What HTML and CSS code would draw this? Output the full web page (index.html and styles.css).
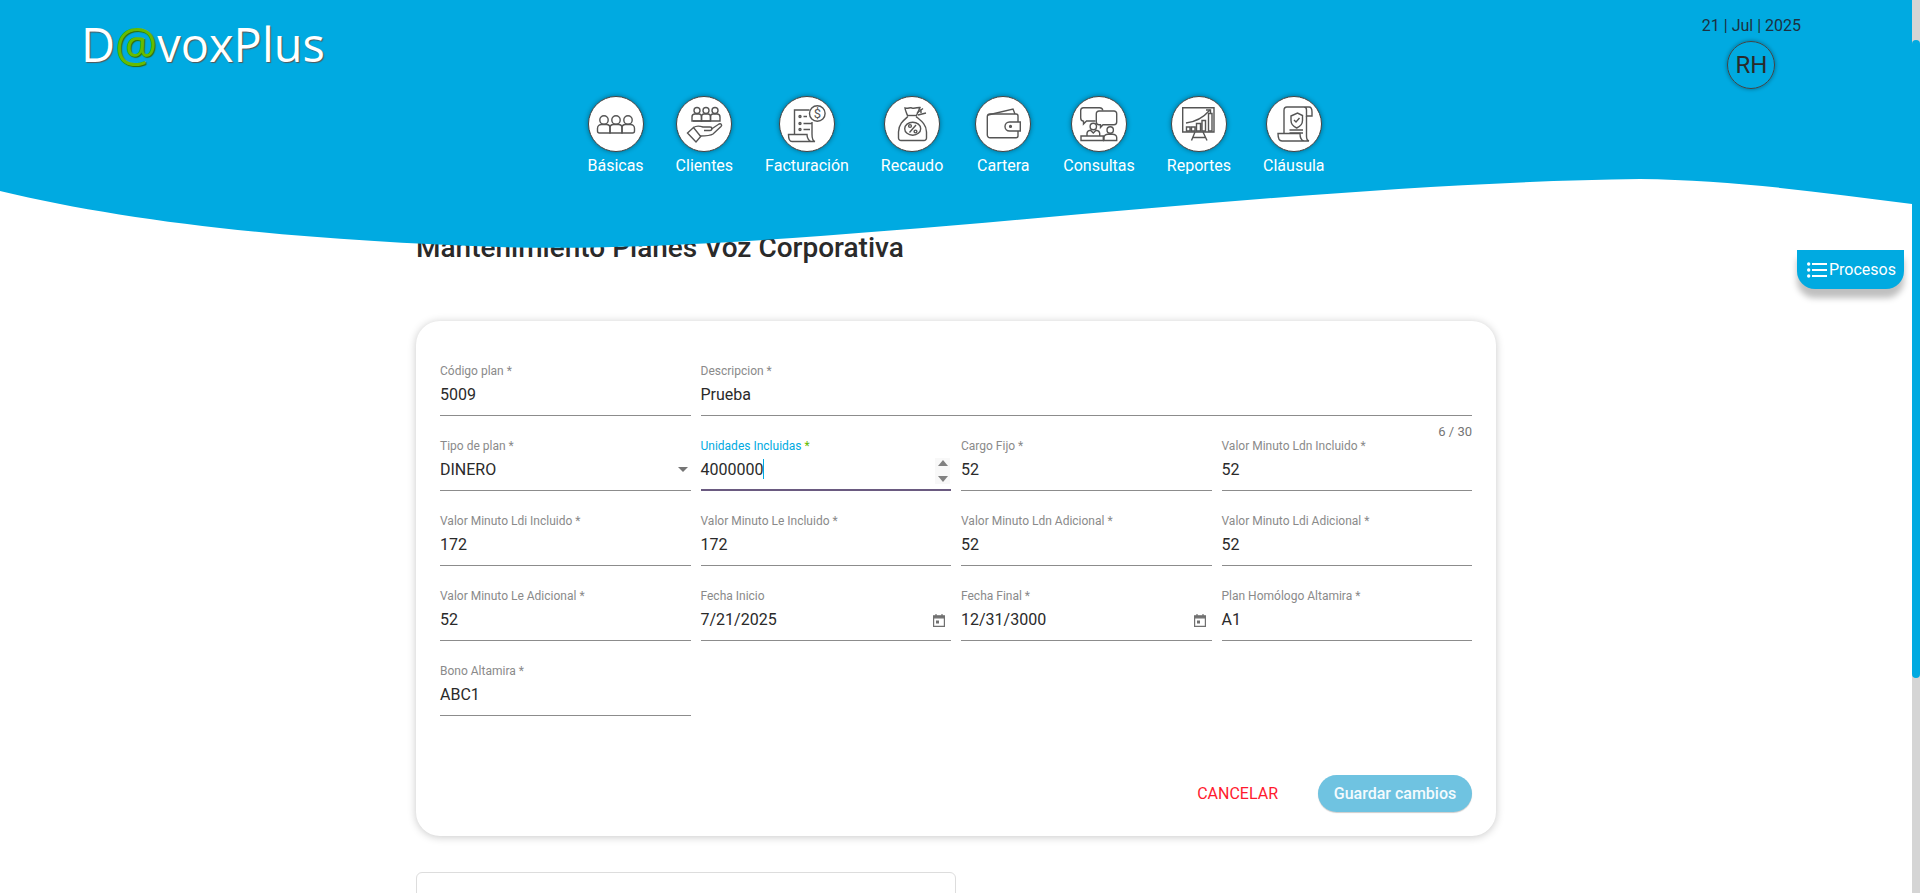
FILE: index.html
```html
<html>
    <head>
        <title>DavoxPlus - Planes Voz Corporativa</title>
        <meta charset="utf-8">
        <link rel="stylesheet" href="styles.css">
    </head>
    <body>
        <div class="app">
            <div class="main">
                <header class="header">
                    <svg class="wave" viewBox="0 0 1912 250" preserveAspectRatio="none">
                        <path d="M0 0H1912V204C1820 192 1730 180 1640 179C1250 184 800 256 500 247C290 240 130 222 0 191Z"/>
                    </svg>
                    <div class="topbar">
                        <div class="logo">D<span class="at">@</span>voxPlus</div>
                        <div class="user">
                            <div class="date">21 | Jul | 2025</div>
                            <div class="avatar">RH</div>
                        </div>
                    </div>
                    <nav class="nav">
                        <a class="nav-item">
                            <span class="circle">
                                <svg viewBox="1 1 54 54">
                                    <circle cx="16" cy="24" r="4.2"/><circle cx="28" cy="24" r="4.2"/><circle cx="40" cy="24" r="4.2"/>
                                    <path d="M9.5 35V32.5C9.5 30 11.5 28.5 13.5 28.5H18.5C20.5 28.5 22 30 22 32V37H11.5A2 2 0 0 1 9.5 35Z"/>
                                    <path d="M22 37V32C22 30 23.5 28.5 25.5 28.5H30.5C32.5 28.5 34 30 34 32V37Z"/>
                                    <path d="M34 37V32C34 30 35.5 28.5 37.5 28.5H42.5C44.5 28.5 46.5 30 46.5 32.5V35A2 2 0 0 1 44.5 37Z"/>
                                </svg>
                            </span>
                            <span class="nav-label">Básicas</span>
                        </a>
                        <a class="nav-item">
                            <span class="circle">
                                <svg viewBox="1 1 54 54">
                                    <circle cx="21" cy="14.5" r="3"/><circle cx="30" cy="14.5" r="3"/><circle cx="39" cy="14.5" r="3"/>
                                    <path d="M16 25V21C16 19 17 18 19 18H23C24.5 18 25.5 19 25.5 21V25Z"/>
                                    <path d="M25.5 25V21C25.5 19 26.5 18 28 18H32C33.5 18 34.5 19 34.5 21V25Z"/>
                                    <path d="M34.5 25V21C34.5 19 35.5 18 37 18H41C43 18 44 19 44 21V25H17"/>
                                    <path d="M11.5 37L17.5 31.5L24.7 40.5L20 46Z"/>
                                    <path d="M17.5 31.5C21 29 24 30 27 31H34C36.5 31 36.5 34.5 34 34.5H28"/>
                                    <path d="M35.5 33L43 28C45 27 46.5 29 45 30.5L37 38C34 40 29 40 24 40"/>
                                </svg>
                            </span>
                            <span class="nav-label">Clientes</span>
                        </a>
                        <a class="nav-item">
                            <span class="circle">
                                <svg viewBox="1 1 54 54">
                                    <path d="M30.5 14H15.5V38"/>
                                    <path d="M33 26V38C33 41 33.5 45 36 45.5H13C11 45.5 9.5 43 9.5 38.5H28C28 42 30 45 32 45.5"/>
                                    <circle cx="38.3" cy="17.5" r="7.8"/>
                                    <text class="glyph" x="38.3" y="22" text-anchor="middle">$</text>
                                    <circle cx="21" cy="20.5" r="1"/><circle cx="21" cy="27.5" r="1"/><circle cx="21" cy="33.5" r="1"/>
                                    <path d="M24.5 20.5H28M24.5 27.5H33M24.5 33.5H31"/>
                                </svg>
                            </span>
                            <span class="nav-label">Facturación</span>
                        </a>
                        <a class="nav-item">
                            <span class="circle">
                                <svg viewBox="1 1 54 54">
                                    <path d="M23.5 19.5C22.5 17 21 14 21 12C24 13 26 11 28 12C31 13 34 11 36 11.5C35 14 33.5 17 32.5 19.5"/>
                                    <path d="M23 19.5H33"/>
                                    <path d="M24 20.5C20 24 14.5 28 14.5 36V42A2.5 2.5 0 0 0 17 44.5H40A2.5 2.5 0 0 0 42.5 42V36C42.5 28 36 24 32 20.5"/>
                                    <path d="M33 17L39 12.5M34 19L42 17M37 13V17"/>
                                    <ellipse cx="28.7" cy="32.7" rx="8" ry="6.5"/>
                                    <path d="M32 29L25.5 36.5"/>
                                    <circle cx="26" cy="30" r="1.4"/><circle cx="31.5" cy="35.5" r="1.4"/>
                                </svg>
                            </span>
                            <span class="nav-label">Recaudo</span>
                        </a>
                        <a class="nav-item">
                            <span class="circle">
                                <svg viewBox="1 1 54 54">
                                    <path d="M13 19L38 13L40 18"/>
                                    <path d="M43 26V20A2 2 0 0 0 41 18H15A2.7 2.7 0 0 0 12.3 20.5V39A2.7 2.7 0 0 0 15 41.7H41A2 2 0 0 0 43 39.7V35"/>
                                    <path d="M45.3 26H34.5A4.5 4.5 0 0 0 34.5 35H45.3Z"/>
                                    <circle cx="35.5" cy="30.4" r="0.9"/>
                                </svg>
                            </span>
                            <span class="nav-label">Cartera</span>
                        </a>
                        <a class="nav-item">
                            <span class="circle">
                                <svg viewBox="1 1 54 54">
                                    <path d="M24.5 25H15.5L12.5 28V25.2C11 25 9.7 24 9.7 22V14.5C9.7 12.8 11 11.7 12.5 11.7H28.5C30.3 11.7 31.7 12.8 31.7 14.5"/>
                                    <path d="M28 15H43A2.7 2.7 0 0 1 45.7 17.7V26A2.7 2.7 0 0 1 43 28.7H32L29.5 31.5V28.7H28A2.7 2.7 0 0 1 25.3 26V17.7A2.7 2.7 0 0 1 28 15Z"/>
                                    <circle cx="22.3" cy="30.5" r="3.2"/>
                                    <path d="M16 40V37.5C16 35.5 17.5 34.5 19.5 34.2L22.3 37L25 34.2C27 34.5 28.7 35.5 28.7 37.5V40"/>
                                    <path d="M10 40H32.3V44.5H10Z"/>
                                    <circle cx="39.2" cy="34" r="3.2"/>
                                    <path d="M33 44.5V41.5C33 39.5 35 38.2 37 38.2H41.5C43.7 38.2 45.7 39.5 45.7 41.5V44.5H32"/>
                                </svg>
                            </span>
                            <span class="nav-label">Consultas</span>
                        </a>
                        <a class="nav-item">
                            <span class="circle">
                                <svg viewBox="1 1 54 54">
                                    <path d="M11.7 11.7H43V36H11.7Z"/>
                                    <path d="M15.5 31H19V35H15.5ZM20.5 31H24V35H20.5ZM25.5 27.5H29.5V35H25.5ZM31 24.5H34.5V35H31ZM37.5 17.5H41V35H37.5Z"/>
                                    <path d="M15 27C24 26 32 22 39 14"/>
                                    <path d="M35 14H39.5V18"/>
                                    <path d="M24 36L20.5 44.5M32 36L36 44.5M22 41.5H34.5"/>
                                </svg>
                            </span>
                            <span class="nav-label">Reportes</span>
                        </a>
                        <a class="nav-item">
                            <span class="circle">
                                <svg viewBox="1 1 54 54">
                                    <path d="M18 37V14.5C18 12.5 19 11 21 11H43C45.5 11 46 13 46 16V20H40.5V14C40.5 12 39.5 11 38 11"/>
                                    <path d="M40.5 20V40C40.5 42 41 44.5 43 45H16C13.5 45 12 42 12 37.5H34C34 41 35.5 44.5 38 45"/>
                                    <path d="M25 20L31.5 17L36.5 19.5V24.5C36.5 28.5 34 30.5 30.7 32C27.5 30.5 25 28.5 25 24.5Z"/>
                                    <path d="M28 24L30 26L33.5 22"/>
                                    <path d="M23.5 34H37M23.5 37H37"/>
                                </svg>
                            </span>
                            <span class="nav-label">Cláusula</span>
                        </a>
                    </nav>
                </header>

                <a class="procesos">
                    <svg class="procesos-icon" viewBox="0 0 20 16">
                        <circle cx="1.7" cy="2" r="1.7"/><circle cx="1.7" cy="8" r="1.7"/><circle cx="1.7" cy="14" r="1.7"/>
                        <path d="M5 1H20V3H5ZM5 7H20V9H5ZM5 13H20V15H5Z"/>
                    </svg>
                    Procesos
                </a>

                <div class="page">
                    <h1 class="title">Mantenimiento Planes Voz Corporativa</h1>

                    <form class="card">
                        <div class="grid">
                            <div class="field">
                                <label>Código plan *</label>
                                <div class="value">5009</div>
                            </div>
                            <div class="field span-3">
                                <label>Descripcion *</label>
                                <div class="value">Prueba</div>
                                <span class="hint">6 / 30</span>
                            </div>

                            <div class="field">
                                <label>Tipo de plan *</label>
                                <div class="value">DINERO<span class="arrow"></span></div>
                            </div>
                            <div class="field focused">
                                <label>Unidades Incluidas <span class="req">*</span></label>
                                <div class="value">4000000<i class="caret"></i>
                                    <span class="spinner">
                                        <span class="up"></span>
                                        <span class="down"></span>
                                    </span>
                                </div>
                            </div>
                            <div class="field">
                                <label>Cargo Fijo *</label>
                                <div class="value">52</div>
                            </div>
                            <div class="field">
                                <label>Valor Minuto Ldn Incluido *</label>
                                <div class="value">52</div>
                            </div>

                            <div class="field">
                                <label>Valor Minuto Ldi Incluido *</label>
                                <div class="value">172</div>
                            </div>
                            <div class="field">
                                <label>Valor Minuto Le Incluido *</label>
                                <div class="value">172</div>
                            </div>
                            <div class="field">
                                <label>Valor Minuto Ldn Adicional *</label>
                                <div class="value">52</div>
                            </div>
                            <div class="field">
                                <label>Valor Minuto Ldi Adicional *</label>
                                <div class="value">52</div>
                            </div>

                            <div class="field">
                                <label>Valor Minuto Le Adicional *</label>
                                <div class="value">52</div>
                            </div>
                            <div class="field">
                                <label>Fecha Inicio</label>
                                <div class="value">7/21/2025
                                    <svg class="cal" viewBox="0 0 12 13"><path d="M3 0V2M9 0V2"/><path class="cal-head" d="M0.6 1.8H11.4V3.8H0.6Z"/><path d="M0.6 3V12.4H11.4V3"/><rect class="cal-dot" x="3" y="6.5" width="3" height="3"/></svg>
                                </div>
                            </div>
                            <div class="field">
                                <label>Fecha Final *</label>
                                <div class="value">12/31/3000
                                    <svg class="cal" viewBox="0 0 12 13"><path d="M3 0V2M9 0V2"/><path class="cal-head" d="M0.6 1.8H11.4V3.8H0.6Z"/><path d="M0.6 3V12.4H11.4V3"/><rect class="cal-dot" x="3" y="6.5" width="3" height="3"/></svg>
                                </div>
                            </div>
                            <div class="field">
                                <label>Plan Homólogo Altamira *</label>
                                <div class="value">A1</div>
                            </div>

                            <div class="field">
                                <label>Bono Altamira *</label>
                                <div class="value">ABC1</div>
                            </div>
                        </div>

                        <div class="actions">
                            <button type="button" class="btn-cancel">CANCELAR</button>
                            <button type="button" class="btn-save">Guardar cambios</button>
                        </div>
                    </form>

                    <div class="card-small"></div>
                </div>
            </div>
            <div class="scrollbar"><div class="thumb"></div></div>
        </div>
    </body>
</html>
```

FILE: styles.css
```css
html, body
{
    margin: 0;
    height: 100%;
    overflow: hidden;
    font-family: Roboto, "Liberation Sans", sans-serif;
    color: #2a2a2a;
    background: #fff;
}

.app
{
    display: flex;
    height: 893px;
    overflow: hidden;
}
.main
{
    position: relative;
    flex: 1;
    min-width: 0;
}

/* barra de scroll */
.scrollbar
{
    width: 8px;
    flex: none;
    padding-top: 40px;
    background: #d5d5d5;
}
.thumb
{
    height: 638px;
    background: #00aae1;
    border-radius: 4px;
}

/* encabezado */
.header
{
    position: relative;
    z-index: 2;
    height: 190px;
}
.wave
{
    position: absolute;
    top: 0;
    left: 0;
    width: 100%;
    height: 250px;
    z-index: -1;
    fill: #00aae1;
}
.topbar
{
    display: flex;
    justify-content: space-between;
    align-items: flex-start;
    height: 96px;
    padding: 0 111px 0 81px;
}
.logo
{
    margin-top: 12px;
    font-family: "Open Sans", sans-serif;
    font-weight: 400;
    font-size: 47px;
    line-height: 64px;
    color: #fff;
    text-shadow: 1px 1px 1px #555;
}
.at
{
    color: #66bb00;
    text-shadow: 1px 1px 1px #2f6b00;
}
.user
{
    display: flex;
    flex-direction: column;
    align-items: center;
    padding-top: 16px;
}
.date
{
    font-size: 16px;
    line-height: 20px;
    color: #1d3040;
}
.avatar
{
    width: 46px;
    height: 46px;
    margin-top: 5px;
    border: 1px solid #444;
    border-radius: 50%;
    box-shadow: 0 0 4px rgba(0,0,0,.4);
    text-align: center;
    font-size: 24px;
    line-height: 46px;
}

.nav
{
    display: flex;
    justify-content: center;
    gap: 32px;
}
.nav-item
{
    display: flex;
    flex-direction: column;
    align-items: center;
}
.circle
{
    display: block;
    width: 54px;
    height: 54px;
    background: #fff;
    border: 1px solid #444;
    border-radius: 50%;
    box-shadow: 0 0 5px rgba(0,0,0,.4);
}
.circle svg
{
    display: block;
    width: 54px;
    height: 54px;
    fill: none;
    stroke: #555;
    stroke-width: 1.4;
}
.glyph
{
    font-family: Roboto, sans-serif;
    font-size: 13px;
    fill: #555;
    stroke: none;
}
.nav-label
{
    margin-top: 4px;
    font-size: 16px;
    line-height: 20px;
    color: #fff;
}

/* boton flotante */
.procesos
{
    position: absolute;
    top: 250px;
    right: 8px;
    z-index: 3;
    display: flex;
    align-items: center;
    gap: 2px;
    width: 107px;
    height: 39px;
    box-sizing: border-box;
    padding-left: 10px;
    background: #00aae1;
    border-radius: 0 0 18px 18px;
    box-shadow: 0 9px 6px rgba(0,0,0,.25);
    color: #fff;
    font-size: 16px;
}
.procesos-icon
{
    width: 20px;
    height: 16px;
    fill: #fff;
}

/* contenido */
.page
{
    width: 1080px;
    margin: 0 auto;
}
.title
{
    margin: 36px 0 51px;
    font-size: 28px;
    font-weight: 500;
    line-height: 44px;
}
.card
{
    padding: 40px 24px 24px;
    background: #fff;
    border-radius: 24px;
    box-shadow: 0 1px 8px rgba(0,0,0,.22);
}
.grid
{
    display: grid;
    grid-template-columns: repeat(4, 1fr);
    column-gap: 10px;
    row-gap: 20px;
}
.span-3
{
    grid-column: span 3;
}
.field
{
    position: relative;
    height: 54px;
    border-bottom: 1px solid #8c8c8c;
}
.field label
{
    display: block;
    padding-top: 1px;
    font-size: 12px;
    line-height: 18px;
    color: #8a8a8a;
}
.value
{
    position: relative;
    margin-top: 3px;
    font-size: 16px;
    line-height: 24px;
}
.hint
{
    position: absolute;
    top: 100%;
    right: 0;
    margin-top: 8px;
    font-size: 13px;
    line-height: 18px;
    color: #757575;
}
.arrow
{
    position: absolute;
    top: 9px;
    right: 3px;
    border-left: 5px solid transparent;
    border-right: 5px solid transparent;
    border-top: 5px solid #757575;
}
.focused
{
    height: 53px;
    border-bottom: 2px solid #6a5a80;
}
.focused label
{
    color: #00aae1;
}
.req
{
    color: #66bb00;
}
.caret
{
    display: inline-block;
    width: 1px;
    height: 20px;
    vertical-align: -4px;
    background: #00aae1;
}
.spinner
{
    position: absolute;
    top: 0;
    right: 1px;
    display: flex;
    flex-direction: column;
    justify-content: space-between;
    align-items: center;
    width: 15px;
    height: 26px;
    padding: 2px 0;
    box-sizing: border-box;
    background: #f8f8f8;
}
.up
{
    border-left: 5px solid transparent;
    border-right: 5px solid transparent;
    border-bottom: 6px solid #808080;
}
.down
{
    border-left: 5px solid transparent;
    border-right: 5px solid transparent;
    border-top: 6px solid #808080;
}
.cal
{
    position: absolute;
    top: 6px;
    right: 6px;
    width: 12px;
    height: 13px;
    fill: none;
    stroke: #707070;
    stroke-width: 1.2;
}
.cal-head
{
    fill: #707070;
}
.cal-dot
{
    fill: #707070;
    stroke: none;
}
.actions
{
    display: flex;
    justify-content: flex-end;
    align-items: center;
    gap: 40px;
    margin-top: 59px;
}
button
{
    border: none;
    font-family: inherit;
    font-size: 16px;
    padding: 0;
    background: none;
}
.btn-cancel
{
    color: #ff1a2e;
}
.btn-save
{
    width: 154px;
    height: 37px;
    border-radius: 19px;
    background: #6fc3e1;
    box-shadow: 0 1px 1px rgba(0,0,0,.2);
    color: #f4fbfe;
    font-weight: 500;
}
.card-small
{
    height: 200px;
    width: 538px;
    margin-top: 36px;
    border: 1px solid #ddd;
    border-radius: 6px;
}
```
